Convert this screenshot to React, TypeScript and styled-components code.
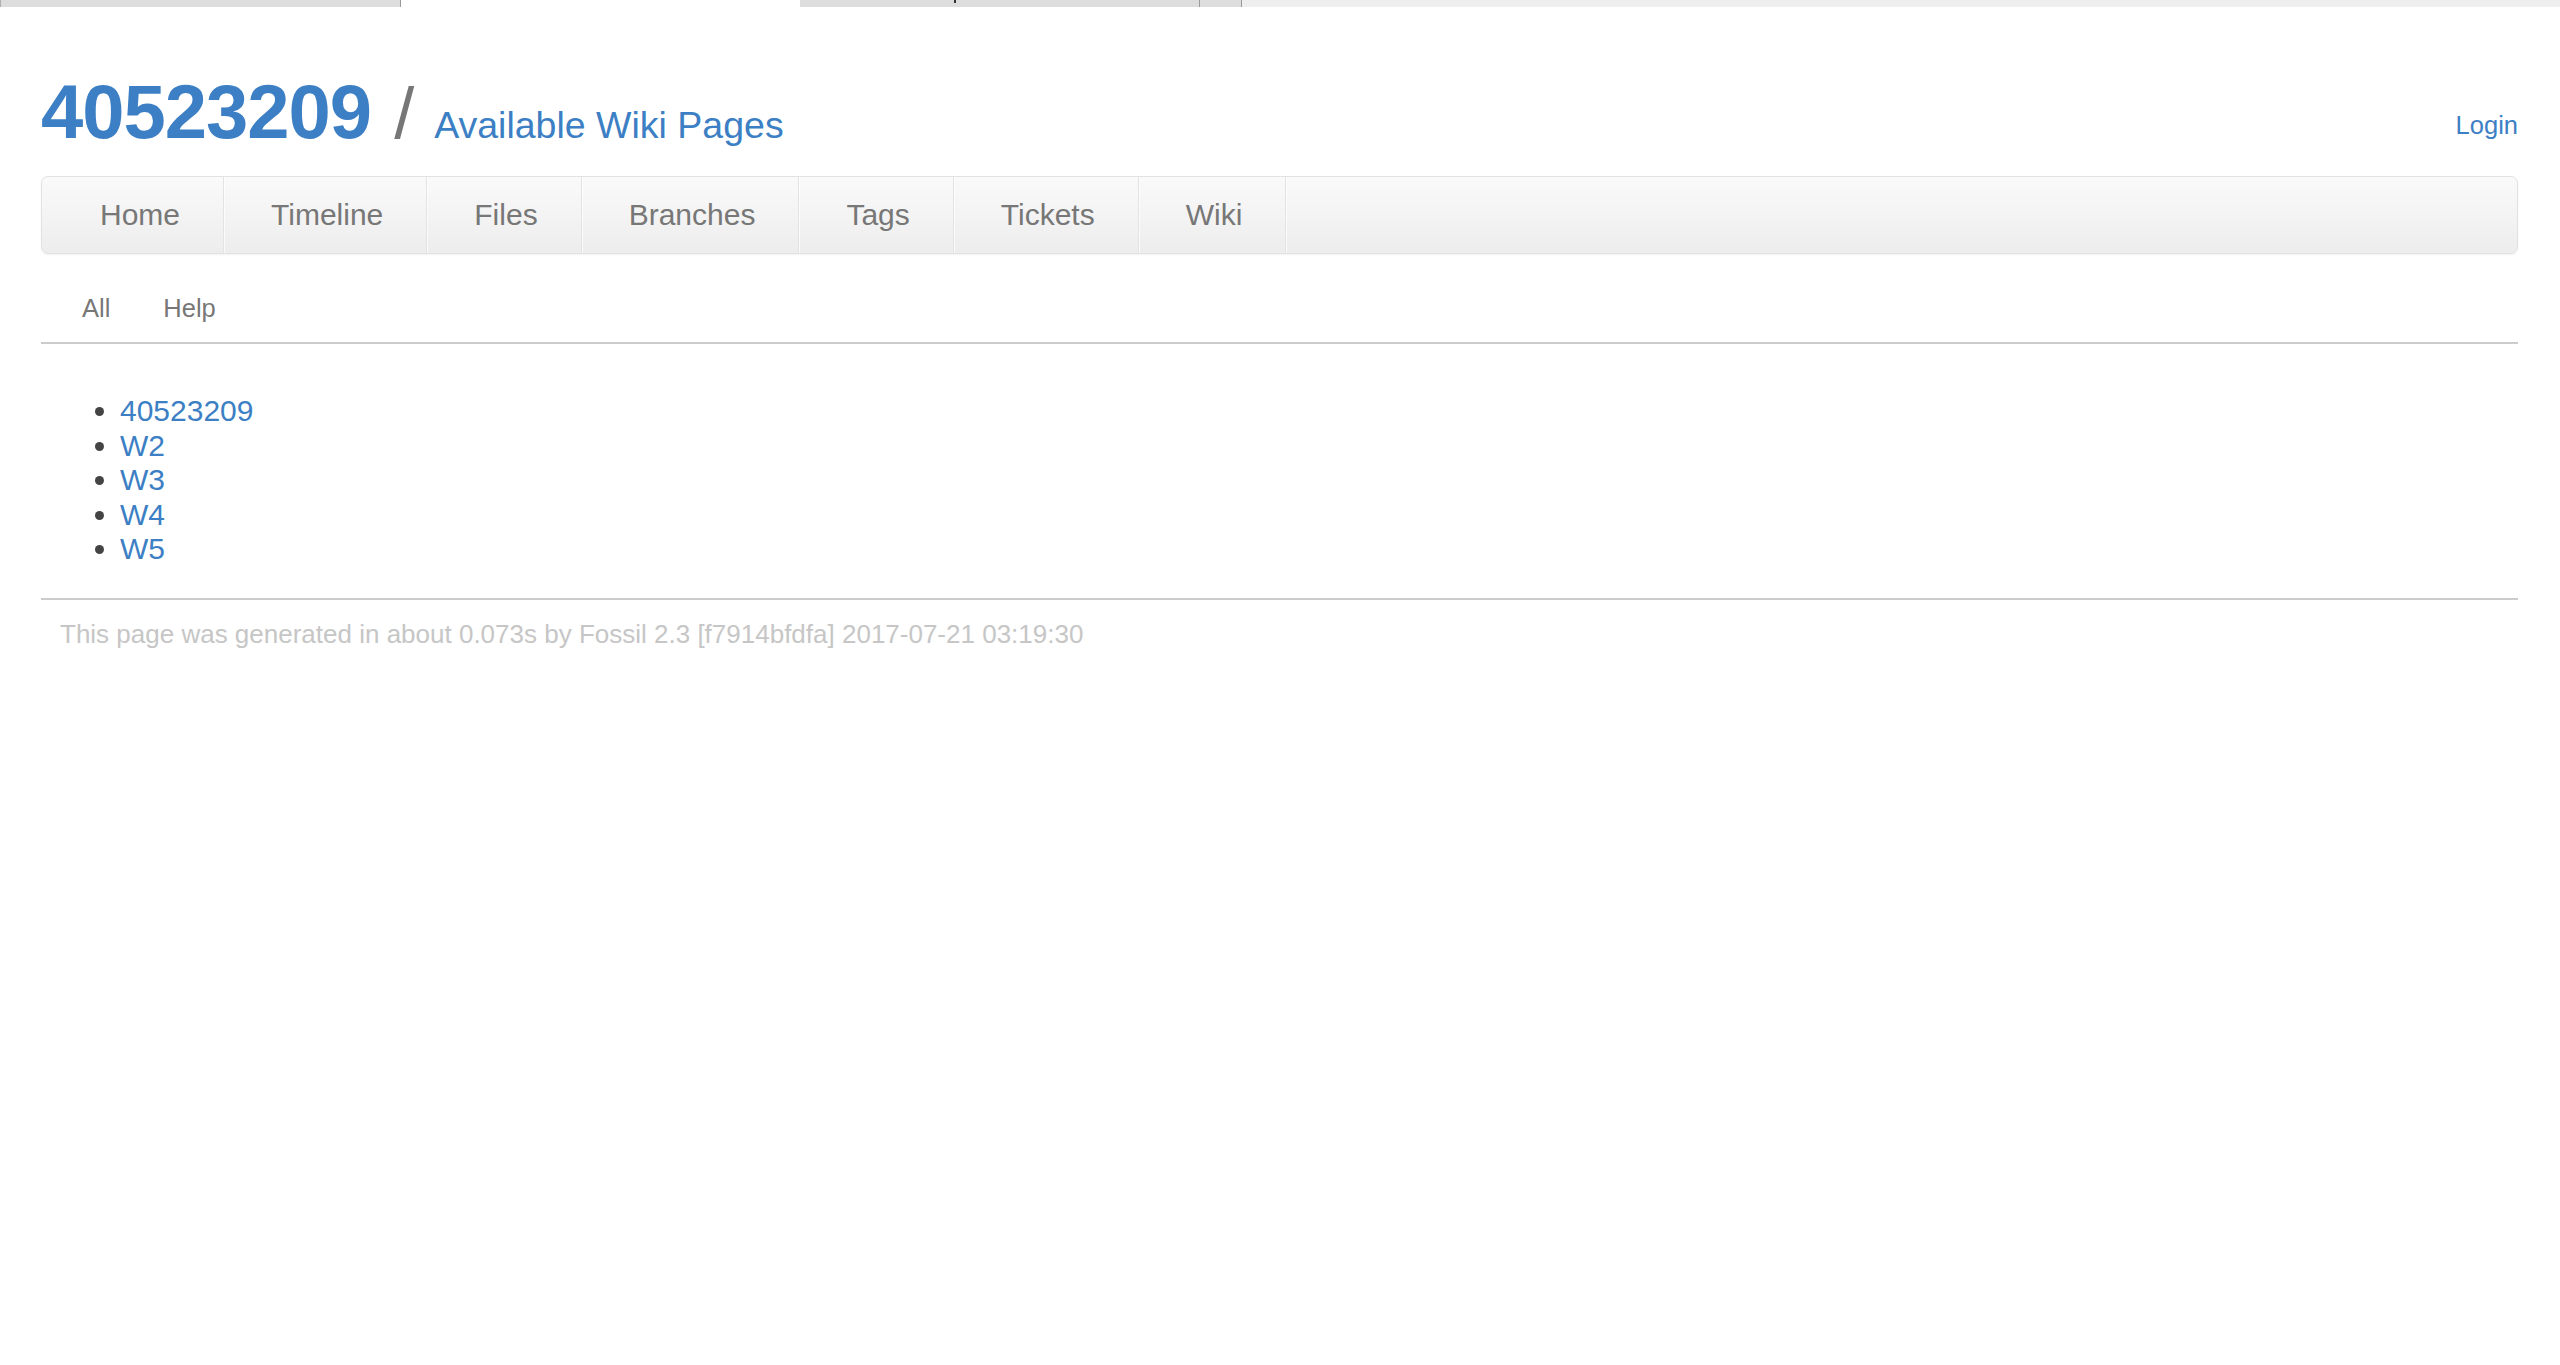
import React from "react";
import styled, { createGlobalStyle } from "styled-components";

const GlobalStyle = createGlobalStyle`
  html, body {
    margin: 0;
    padding: 0;
    background: #ffffff;
  }
  body {
    font-family: "Liberation Sans", Arial, Helvetica, sans-serif;
    color: #444444;
  }
  a {
    text-decoration: none;
  }
`;

const TabStrip = styled.div`
  display: flex;
  height: 7px;
  background: #eeeeee;
`;

const Tab = styled.div<{ $w: number; $active?: boolean; $edge?: boolean }>`
  width: ${(p) => p.$w}px;
  flex: none;
  box-sizing: border-box;
  background: ${(p) => (p.$active ? "#ffffff" : "#dddddd")};
  border-right: ${(p) => (p.$active ? "none" : "1px solid #9a9a9a")};
  border-left: ${(p) => (p.$edge ? "1px solid #b0b0b0" : "none")};
  display: flex;
  align-items: flex-start;
  padding-left: ${(p) => (p.$w > 300 && !p.$active && !p.$edge ? 154 : 0)}px;
`;

const TabMark = styled.span`
  display: block;
  width: 2px;
  height: 3px;
  background: #333333;
`;

const Page = styled.div`
  padding: 0 42px 0 41px;
`;

const Header = styled.header`
  display: flex;
  justify-content: space-between;
  align-items: flex-end;
  padding-top: 67px;
`;

const TitleGroup = styled.div`
  display: flex;
  align-items: baseline;
`;

const ProjectName = styled.a`
  font-size: 76px;
  line-height: 76px;
  font-weight: bold;
  color: #3c7fc4;
  letter-spacing: -1px;
`;

const Slash = styled.span`
  font-size: 72px;
  line-height: 76px;
  color: #777777;
  margin: 0 20px 0 23px;
`;

const PageTitle = styled.a`
  font-size: 37.5px;
  line-height: 40px;
  color: #3c7fc4;
`;

const LoginLink = styled.a`
  font-size: 25.5px;
  line-height: 30px;
  color: #3c7fc4;
  margin-bottom: 11px;
`;

const MainMenu = styled.nav`
  margin-top: 25px;
  height: 78px;
  box-sizing: border-box;
  border: 1px solid #e2e2e2;
  border-radius: 7px;
  background: linear-gradient(to bottom, #fafafa 0%, #ededed 100%);
  box-shadow: 0 1px 2px rgba(0, 0, 0, 0.06);
  display: flex;
  padding-left: 11px;
`;

const MenuItem = styled.a`
  display: block;
  font-size: 30px;
  line-height: 75px;
  color: #777777;
  padding: 0 43px 0 47px;
  border-right: 1px solid #e3e3e3;
  box-shadow: 1px 0 0 rgba(255, 255, 255, 0.7);
`;

const SubMenu = styled.div`
  display: flex;
  gap: 53px;
  margin-top: 34px;
  padding: 0 0 14px 41px;
  border-bottom: 2px solid #cccccc;
`;

const SubMenuItem = styled.a`
  font-size: 25.5px;
  line-height: 40px;
  color: #777777;
`;

const PageList = styled.ul`
  margin: 50px 0 0 0;
  padding-left: 79px;
  list-style: disc;
`;

const PageItem = styled.li`
  font-size: 30px;
  line-height: 34.5px;
  color: #444444;
`;

const PageLink = styled.a`
  color: #3c7fc4;
`;

const Footer = styled.footer`
  margin-top: 31px;
  border-top: 2px solid #cccccc;
  padding: 14px 0 0 19px;
  font-size: 26px;
  line-height: 40px;
  color: #c6c6c6;
`;

const menu = ["Home", "Timeline", "Files", "Branches", "Tags", "Tickets", "Wiki"];
const pages = ["40523209", "W2", "W3", "W4", "W5"];

export default function App() {
  return (
    <>
      <GlobalStyle />
      <TabStrip>
        <Tab $w={401} $edge />
        <Tab $w={399} $active />
        <Tab $w={400}>
          <TabMark />
        </Tab>
        <Tab $w={42} />
      </TabStrip>
      <Page>
        <Header>
          <TitleGroup>
            <ProjectName href="#">40523209</ProjectName>
            <Slash>/</Slash>
            <PageTitle href="#">Available Wiki Pages</PageTitle>
          </TitleGroup>
          <LoginLink href="#">Login</LoginLink>
        </Header>
        <MainMenu>
          {menu.map((m) => (
            <MenuItem key={m} href="#">
              {m}
            </MenuItem>
          ))}
        </MainMenu>
        <SubMenu>
          <SubMenuItem href="#">All</SubMenuItem>
          <SubMenuItem href="#">Help</SubMenuItem>
        </SubMenu>
        <PageList>
          {pages.map((p) => (
            <PageItem key={p}>
              <PageLink href="#">{p}</PageLink>
            </PageItem>
          ))}
        </PageList>
        <Footer>
          This page was generated in about 0.073s by Fossil 2.3 [f7914bfdfa] 2017-07-21 03:19:30
        </Footer>
      </Page>
    </>
  );
}
